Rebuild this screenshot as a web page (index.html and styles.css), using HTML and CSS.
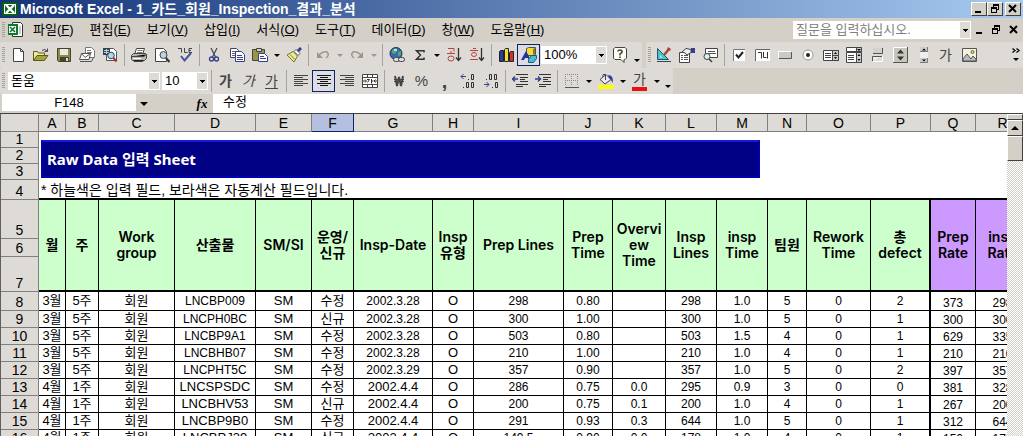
FILE: index.html
```html
<!DOCTYPE html>
<html lang="ko">
<head>
<meta charset="utf-8">
<title>Microsoft Excel - 1_카드_회원_Inspection_결과_분석</title>
<link rel="stylesheet" href="styles.css">
</head>
<body>
<div class="window">
  <header class="titlebar">
    <svg class="app-icon" viewBox="0 0 16 16"><path fill="#0b5a1c" d="M0 1h16v14H0z"/><path fill="#fff" d="M2 3h12v10H2z"/><path fill="#0b6b22" d="M3 4h10v8H3z"/><path stroke="#fff" stroke-width="2.4" d="M4 4l8 8M12 4l-8 8"/></svg>
    <h1 class="title">Microsoft Excel - 1_카드_회원_Inspection_결과_분석</h1>
    <div class="win-buttons">
      <button class="win-btn" aria-label="최소화"><svg viewBox="0 0 12 10"><path d="M2 7h6v2H2z"/></svg></button>
      <button class="win-btn" aria-label="복원"><svg viewBox="0 0 12 10"><path fill-rule="evenodd" d="M4 0h6v6H8v3H2V3h2zM5 2v1h3v2h1V2zM3 5v3h4V5z"/></svg></button>
      <button class="win-btn win-close" aria-label="닫기"><svg viewBox="0 0 12 10"><path stroke="#000" stroke-width="2" d="M2 1l7 7M9 1l-7 7"/></svg></button>
    </div>
  </header>

  <nav class="menubar">
    <span class="grip"></span>
    <svg class="book-icon" viewBox="0 0 17 16"><path fill="#fff" stroke="#333" d="M5.500 .5h8l2 2v12h-10z"/><path stroke="#999" d="M12 5h2M12 7h2M12 9h2M12 11h2"/><path fill="#0b7a2a" d="M1 2h10v11H1z"/><path fill="#fff" d="M2 4h7v7H2z"/><path stroke="#0b7a2a" stroke-width="1.600" d="M3 5l5 5M8 5l-5 5"/></svg>
    <button class="menu">파일(<u>F</u>)</button>
    <button class="menu">편집(<u>E</u>)</button>
    <button class="menu">보기(<u>V</u>)</button>
    <button class="menu">삽입(<u>I</u>)</button>
    <button class="menu">서식(<u>O</u>)</button>
    <button class="menu">도구(<u>T</u>)</button>
    <button class="menu">데이터(<u>D</u>)</button>
    <button class="menu">창(<u>W</u>)</button>
    <button class="menu">도움말(<u>H</u>)</button>
    <span class="combo ask"><input type="text" aria-label="질문" placeholder="질문을 입력하십시오."></span>
    <div class="doc-buttons">
      <button class="doc-btn" aria-label="창 최소화"><svg viewBox="0 0 12 10"><path d="M2 7h6v2H2z"/></svg></button>
      <button class="doc-btn" aria-label="창 복원"><svg viewBox="0 0 12 10"><path fill-rule="evenodd" d="M4 0h6v6H8v3H2V3h2zM5 2v1h3v2h1V2zM3 5v3h4V5z"/></svg></button>
      <button class="doc-btn doc-close" aria-label="창 닫기"><svg viewBox="0 0 12 10"><path stroke="#000" stroke-width="2" d="M2 1l7 7M9 1l-7 7"/></svg></button>
    </div>
  </nav>

  <div class="toolbar-row">
    <div class="toolbar">
      <span class="grip"></span>
      <button class="tool" aria-label="새로 만들기"><svg viewBox="0 0 16 16"><path fill="#fff" stroke="#444" d="M3.500 1.500h7l3 3v10h-10z"/><path fill="none" stroke="#444" d="M10.500 1.500v3h3"/></svg></button>
      <button class="tool" aria-label="열기"><svg viewBox="0 0 16 16"><path fill="#ece9a0" stroke="#5d5b1c" d="M.5 13.500v-9h4l1 1.500h6v3"/><path fill="#a5a33c" stroke="#5d5b1c" d="M.5 13.500l3.500-5h11l-3.500 5z"/><path fill="none" stroke="#444" d="M9 3.500q3-2.500 5 .5M14.500 1.500v3h-3"/></svg></button>
      <button class="tool" aria-label="저장"><svg viewBox="0 0 16 16"><path fill="#8a8a4a" stroke="#44442a" d="M1.500 1.500h13v13h-12l-1-1z"/><path fill="#e8e8e4" d="M4 2h8v6H4z"/><path fill="#44442a" d="M4 10h9v4H4z"/><path fill="#ddd" d="M10 11h2v3h-2z"/></svg></button>
      <button class="tool" aria-label="전자 메일"><svg viewBox="0 0 16 16"><path fill="#fff" stroke="#777" d="M6.500 .5h6l3 3v7h-9z"/><path stroke="#777" d="M8 3.500h4M8 5.500h5"/><path fill="#fff" stroke="#555" d="M2.500 6.500h9l-1.500 6H.5z"/><path fill="none" stroke="#555" d="M2.500 6.500l3.500 4 5.500-4M1 14.500h11.500l2-4"/></svg></button>
      <button class="tool" aria-label="검색"><svg viewBox="0 0 16 16"><path fill="#fff" stroke="#555" d="M4.500 1.500h7l3 3v9h-10z"/><path fill="#345" d="M1 1h7v7H1z"/><path stroke="#bcd" d="M2 3.500h5M2 5.500h5M4.500 2v5"/><circle cx="9" cy="8.500" r="3.300" fill="#a9dbe8" stroke="#345"/><path stroke="#a33" stroke-width="2.200" d="M11.500 11l3 3.500"/></svg></button>
      <span class="sep"></span>
      <button class="tool" aria-label="인쇄"><svg viewBox="0 0 16 16"><path fill="#fff" stroke="#444" d="M5.500 1.500h8l-2 6h-8z"/><path stroke="#777" d="M6.500 3.500h5M6 5.500h5"/><path fill="#b8b6ae" stroke="#444" d="M.5 8.500l2-2h12l1 1v4l-2 2H1.500l-1-1z"/><path stroke="#444" d="M1 9.500h12l2-2M3 13.500v1h8l2-1"/><path stroke="#fff" d="M2 11.500h8"/></svg></button>
      <button class="tool" aria-label="인쇄 미리 보기"><svg viewBox="0 0 16 16"><path fill="#fff" stroke="#444" d="M1.500 1.500h8l3 3v10h-11z"/><circle cx="9.500" cy="8" r="3.500" fill="#b9d6de" stroke="#444"/><path stroke="#333" stroke-width="2" d="M12 11l3.500 4"/></svg></button>
      <button class="tool" aria-label="맞춤법 검사"><svg viewBox="0 0 16 16"><path fill="none" stroke="#444" d="M1 1.500h3.500v4M7.500 1v4.500h3M15 1.500h-3v4h3M12 3.500h2"/><path fill="none" stroke="#4850a0" stroke-width="2" d="M4 9l3.500 4.500L14 6"/></svg></button>
      <span class="sep"></span>
      <button class="tool" aria-label="잘라내기"><svg viewBox="0 0 16 16"><path fill="none" stroke="#445" stroke-width="1.200" d="M5 1l4.500 9M11 1L6.500 10"/><circle cx="5.500" cy="12" r="2" fill="none" stroke="#34408f" stroke-width="1.300"/><circle cx="10.500" cy="12" r="2" fill="none" stroke="#34408f" stroke-width="1.300"/></svg></button>
      <button class="tool" aria-label="복사"><svg viewBox="0 0 16 16"><path fill="#fff" stroke="#445" d="M1.500 1.500h6l2 2v7h-8z"/><path stroke="#667" d="M3 4.500h4M3 6.500h4M3 8.500h3"/><path fill="#fff" stroke="#34408f" d="M6.500 4.500h6l3 3v7h-9z"/><path stroke="#34408f" d="M8 8.500h5M8 10.500h6M8 12.500h6"/></svg></button>
      <button class="tool" aria-label="붙여넣기"><svg viewBox="0 0 16 16"><path fill="#9a9648" stroke="#444" d="M.5 2.500h12v11H.5z"/><path fill="#d8d6a0" stroke="#444" d="M4.500 1.500h5v3h-5z"/><path fill="#fff" stroke="#34408f" d="M6.500 6.500h6l3 3v5h-9z"/><path stroke="#34408f" d="M8 9.500h4M8 11.500h6"/></svg></button>
      <button class="drop" aria-label="붙여넣기 옵션"></button>
      <button class="tool" aria-label="서식 복사"><svg viewBox="0 0 16 16"><path fill="#efeb9b" stroke="#77742a" d="M1 8l6-3.500 4.500 4.500L8 15z"/><path stroke="#77742a" d="M4 7.500l5 5"/><path fill="#fff" stroke="#555" d="M8 4.500l2-2 4 4-2 2z"/><path stroke="#34408f" stroke-width="3" d="M12 4l3-3"/></svg></button>
      <span class="sep"></span>
      <button class="tool" aria-label="실행 취소"><svg viewBox="0 0 16 16"><path fill="none" stroke="#9a978f" stroke-width="1.500" d="M4 8q4-4 8-3 3 3-1 6"/><path fill="#9a978f" d="M2 5v6h6z"/></svg></button>
      <button class="drop off" aria-label="실행 취소 목록"></button>
      <button class="tool" aria-label="다시 실행"><svg viewBox="0 0 16 16"><path fill="none" stroke="#9a978f" stroke-width="1.500" d="M12 8Q8 4 4 5q-3 3 1 6"/><path fill="#9a978f" d="M14 5v6H8z"/></svg></button>
      <button class="drop off" aria-label="다시 실행 목록"></button>
      <span class="sep"></span>
      <button class="tool" aria-label="하이퍼링크"><svg viewBox="0 0 16 16"><circle cx="7" cy="6.500" r="6" fill="#3a66b8" stroke="#234"/><path fill="#4fae62" d="M3 3l4-2 1 3-2 3-3-1zM9 5l3-1v4l-3 1z"/><path fill="#b9dff5" d="M5 2h3v2H5z"/><rect x="4.500" y="10.500" width="6" height="4" rx="2" fill="#ddd" stroke="#444"/><rect x="9.500" y="10.500" width="6" height="4" rx="2" fill="#ddd" stroke="#444"/></svg></button>
      <button class="tool" aria-label="자동 합계"><svg viewBox="0 0 16 16"><path fill="none" stroke="#333" stroke-width="1.500" d="M12 5.500V3.800H4.500L8.500 8l-4 4.200H12v-1.700"/></svg></button>
      <button class="drop" aria-label="함수 목록"></button>
      <button class="tool" aria-label="오름차순 정렬"><svg viewBox="0 0 16 16"><path fill="none" stroke="#b0473f" d="M2 1.500h6v3M5 4v2.500M1 6.500h8"/><ellipse cx="5" cy="11.500" rx="3" ry="2.500" fill="none" stroke="#b0473f"/><path fill="none" stroke="#333" stroke-width="1.300" d="M12.500 1v12M10 10.500l2.500 3 2.500-3"/></svg></button>
      <button class="tool" aria-label="내림차순 정렬"><svg viewBox="0 0 16 16"><path fill="none" stroke="#b0473f" d="M4 1.500h3M1 3.500h8M1 12.500h8"/><ellipse cx="5" cy="7.500" rx="2.500" ry="2" fill="none" stroke="#b0473f"/><path fill="none" stroke="#333" stroke-width="1.300" d="M12.500 1v12M10 10.500l2.500 3 2.500-3"/></svg></button>
      <span class="sep"></span>
      <button class="tool" aria-label="차트 마법사"><svg viewBox="0 0 16 16"><path fill="#2c3c9c" stroke="#222" d="M1.500 4.500l1-1h3v11h-4z"/><path fill="#f2dc3c" stroke="#222" d="M6.500 2.500l1-1h3v13h-4z"/><path fill="#cc3328" stroke="#222" d="M11.500 5.500l1-1h3v10h-4z"/></svg></button>
      <button class="tool on" aria-label="그리기"><svg viewBox="0 0 16 16"><path fill="#f0dd35" stroke="#554" d="M5.500 1.500l2-1h7v7l-2 1h-7z"/><path fill="#8a7a20" d="M12 2l2-1v6l-2 1z"/><path fill="#2430a0" d="M0 13L5 4l5 9H8L7 11H4l-1 2z"/><path fill="#44bfd6" stroke="#257" d="M7.500 12.500l3-4h5v3l-3 4h-5z"/></svg></button>
      <span class="combo zoom"><select aria-label="확대/축소"><option>100%</option></select></span>
      <button class="tool" aria-label="도움말"><svg viewBox="0 0 16 16"><path fill="#fffef0" stroke="#444" d="M3 .5h10l1.500 1.500v9L13 12.500h-1v3l-3-3H3L1.500 11V2z"/><path fill="none" stroke="#444" stroke-width="1.600" d="M5.800 4.500Q6 3 8 3t2.200 1.600Q10.200 6 8 7v1.500M8 9.500v1.500"/></svg></button>
      <button class="drop low" aria-label="도구 모음 옵션"></button>
    </div>
    <div class="toolbar grow">
      <span class="grip"></span>
      <button class="tool" aria-label="디자인 모드"><svg viewBox="0 0 16 16"><path fill="#48c4d4" stroke="#256" d="M1.500 1.500v11h11z"/><path fill="#dedad5" d="M4 8v2.500h2.500z"/><path stroke="#345" d="M1 14.500h14"/><path stroke="#8a5230" stroke-width="2.400" d="M8 8l5-6"/><path fill="#c33" d="M12 0l3 2-1 2-3-2z"/></svg></button>
      <button class="tool" aria-label="속성"><svg viewBox="0 0 16 16"><path fill="#fff" stroke="#444" d="M.5 5.500h10v10H.5z"/><path stroke="#555" d="M2 8.500h2M5 8.500h4M2 10.500h2M5 10.500h4M2 12.500h2M5 12.500h4"/><path fill="#eee" stroke="#444" d="M3 5l4-3.500 5 1v3L8 8 6 6z"/><path fill="#34408f" d="M12 1h4v5h-4z"/></svg></button>
      <button class="tool" aria-label="코드 보기"><svg viewBox="0 0 16 16"><path fill="#fff" stroke="#444" d="M3.500 1.500h12v9h-12z"/><path stroke="#555" d="M6 4.500h7M6 6.500h8"/><circle cx="5" cy="9.500" r="3" fill="#ddeef0" stroke="#444"/><path stroke="#444" stroke-width="1.600" d="M7 12l3 3"/></svg></button>
      <span class="sep"></span>
      <button class="tool" aria-label="확인란"><svg viewBox="0 0 16 16"><path fill="#fff" d="M2 2h12v12H2z"/><path fill="none" stroke="#777" d="M2.500 14V2.500H14"/><path fill="none" stroke="#222" stroke-width="2" d="M5 7.500l2.500 3L12 5"/></svg></button>
      <button class="tool" aria-label="입력란"><svg viewBox="0 0 16 16"><path fill="#fff" d="M1 2h15v12H1z"/><path fill="none" stroke="#666" d="M1.500 14V2.500H16"/><path fill="none" stroke="#333" d="M4 5.500h3.500v6M9.500 5v5.500h3M13.500 5v6.500"/></svg></button>
      <button class="tool" aria-label="명령 단추"><svg viewBox="0 0 16 16"><path fill="#ccc9c1" d="M2 5h12v6H2z"/><path fill="none" stroke="#fff" d="M1.500 11V4.500H14"/><path fill="none" stroke="#555" d="M2 11.500h12.500V5"/></svg></button>
      <button class="tool" aria-label="옵션 단추"><svg viewBox="0 0 16 16"><circle cx="8" cy="8" r="5" fill="#fff" stroke="#999"/><circle cx="8" cy="8" r="2" fill="#222"/></svg></button>
      <button class="tool" aria-label="목록 상자"><svg viewBox="0 0 16 16"><path fill="#fff" stroke="#444" d="M.5 3.500h15v10H.5z"/><path stroke="#444" d="M2 6.500h6M2 8.500h6M2 10.500h6"/><path fill="#ccc" stroke="#444" d="M9.500 3.500h6v10h-6zM9.500 8.500h6"/><path d="M11 7l1.500-2L14 7zM11 10l1.500 2L14 10z"/></svg></button>
      <button class="tool" aria-label="콤보 상자"><svg viewBox="0 0 16 16"><path fill="#fff" stroke="#444" d="M.5 .5h15v4H.5zM.5 5.500h15v10H.5z"/><path stroke="#444" d="M2 8.500h6M2 10.500h6M2 12.500h6"/><path fill="#ccc" stroke="#444" d="M10.500 .5h5v4h-5zM10.500 5.500h5v10h-5z"/><path d="M11 2h4l-2 2zM11.500 9l1.500-2 1.500 2zM11.500 12l1.500 2 1.500-2z"/></svg></button>
      <button class="tool" aria-label="토글 단추"><svg viewBox="0 0 16 16"><path fill="#d4d0c8" d="M4 1h9v6H4z"/><path fill="none" stroke="#555" d="M4 6.500h9.500V1"/><path fill="none" stroke="#fff" d="M4 14.500h9.500V9"/><path fill="#eee" stroke="#555" d="M3.500 14V9.500H13"/></svg></button>
      <button class="tool" aria-label="스핀 단추"><svg viewBox="0 0 16 16"><path fill="#c8c5bd" d="M1 0h15v16H1z"/><path fill="none" stroke="#fff" d="M1.500 15V.5H15"/><path fill="none" stroke="#555" d="M1 15.500h14.500V0"/><path fill="#333" d="M5 6.500l3.500-4 3.500 4zM5 9.500l3.500 4 3.500-4z"/></svg></button>
      <button class="tool" aria-label="스크롤 막대"><svg viewBox="0 0 16 16"><path fill="#eee" d="M5 1h8v14H5z"/><path fill="#ccc" d="M5 0h8v5H5zM5 11h8v5H5z"/><path fill="none" stroke="#777" d="M5 4.500h7.500V0M5 15.500h7.500V11"/><path d="M7 3.500l2-2 2 2zM7 12.500l2 2 2-2z"/></svg></button>
      <button class="tool text-tool" aria-label="레이블">가</button>
      <button class="tool" aria-label="이미지"><svg viewBox="0 0 16 16"><path fill="#f4f2dc" stroke="#555" d="M1.500 1.500h14v13h-14z"/><circle cx="11.500" cy="5" r="1.500" fill="#efe04a" stroke="#665"/><path fill="#bbb" stroke="#555" d="M2 12l4-5 4 5 2-3 3 3v2H2z"/></svg></button>
      <button class="more" aria-label="추가 단추"><svg viewBox="0 0 8 16"><path fill="none" stroke="#000" stroke-width="1.300" d="M.5 1.500l2.500 2-2.500 2M4.500 1.500l2.500 2-2.500 2"/><path d="M1 11h6l-3 3z"/></svg></button>
    </div>
  </div>

  <div class="toolbar-row">
    <div class="toolbar">
      <span class="grip"></span>
      <span class="combo font"><select aria-label="글꼴"><option>돋움</option></select></span>
      <span class="combo size"><select aria-label="글꼴 크기"><option>10</option></select></span>
      <span class="sep"></span>
      <button class="tool text-tool b" aria-label="굵게">가</button>
      <button class="tool text-tool i" aria-label="기울임꼴">가</button>
      <button class="tool text-tool u" aria-label="밑줄">가</button>
      <span class="sep"></span>
      <button class="tool" aria-label="왼쪽 맞춤"><svg viewBox="0 0 16 16"><path stroke="#444" d="M1 2.500h14M1 4.500h9M1 6.500h14M1 8.500h9M1 10.500h14M1 12.500h9"/></svg></button>
      <button class="tool on" aria-label="가운데 맞춤"><svg viewBox="0 0 16 16"><path stroke="#111" d="M1 2.500h14M4 4.500h8M1 6.500h14M4 8.500h8M1 10.500h14M4 12.500h8"/></svg></button>
      <button class="tool" aria-label="오른쪽 맞춤"><svg viewBox="0 0 16 16"><path stroke="#444" d="M1 2.500h14M6 4.500h9M1 6.500h14M6 8.500h9M1 10.500h14M6 12.500h9"/></svg></button>
      <button class="tool" aria-label="병합하고 가운데 맞춤"><svg viewBox="0 0 16 16"><path fill="#fff" stroke="#444" d="M.5 1.500h15v13H.5zM.5 4.500h15M.5 11.500h15M5.500 1.500v3M10.500 1.500v3M5.500 11.500v3M10.500 11.500v3"/><path fill="none" stroke="#333" d="M5 6.500h2.500l-2 3M9.500 6v4.500M10 8h1.500M1 8h3M15 8h-3M3 6.500L4.500 8 3 9.500M13.500 6.500L12 8l1.500 1.500"/></svg></button>
      <span class="sep"></span>
      <button class="tool" aria-label="통화 스타일"><svg viewBox="0 0 16 16"><path fill="none" stroke="#444" stroke-width="2" d="M4 3l2 10 2-9 2 9 2-10"/><path stroke="#444" d="M3 6.500h10M3 8.500h10"/></svg></button>
      <button class="tool sign" aria-label="백분율 스타일">%</button>
      <button class="tool sign comma" aria-label="쉼표 스타일">,</button>
      <button class="tool" aria-label="자릿수 늘림"><svg viewBox="0 0 16 16"><path fill="none" stroke="#34408f" d="M1 3.500h5M3.500 1L1 3.500 3.500 6"/><path fill="#333" d="M8 6h1v1H8zM3 14h1v1H3z"/><path fill="none" stroke="#333" d="M11.500 1.500h2v5h-2zM6.500 9.500h2v5h-2zM11.500 9.500h2v5h-2z"/></svg></button>
      <button class="tool" aria-label="자릿수 줄임"><svg viewBox="0 0 16 16"><path fill="none" stroke="#34408f" d="M1 11.500h5M3.500 9L6 11.500 3.500 14"/><path fill="#333" d="M3 6h1v1H3zM9 14h1v1H9z"/><path fill="none" stroke="#333" d="M6.500 1.500h2v5h-2zM11.500 1.500h2v5h-2zM12.500 9.500h2v5h-2z"/></svg></button>
      <span class="sep"></span>
      <button class="tool" aria-label="내어쓰기"><svg viewBox="0 0 16 16"><path stroke="#333" d="M4 1.500h12M8 4.500h8M8 6.500h5M8 8.500h8M4 11.500h12M4 13.500h7"/><path fill="none" stroke="#34408f" stroke-width="1.400" d="M0 6h6M3 3.500L.5 6 3 8.500"/></svg></button>
      <button class="tool" aria-label="들여쓰기"><svg viewBox="0 0 16 16"><path stroke="#333" d="M4 1.500h12M8 4.500h8M8 6.500h5M8 8.500h8M4 11.500h12M4 13.500h7"/><path fill="none" stroke="#34408f" stroke-width="1.400" d="M0 6h6M3 3.500L5.500 6 3 8.500"/></svg></button>
      <span class="sep"></span>
      <button class="tool" aria-label="테두리"><svg viewBox="0 0 16 16"><path fill="none" stroke="#888" stroke-dasharray="1 1" d="M1.500 1v12M7.500 1v12M13.500 1v12M1 1.500h13M1 7.500h13"/><path stroke="#555" d="M1 14.500h14"/></svg></button>
      <button class="drop" aria-label="테두리 목록"></button>
      <button class="tool" aria-label="채우기 색"><svg viewBox="0 0 16 16"><path fill="#ff0" d="M0 12h16v4H0z"/><path fill="#e8e8f4" stroke="#445" d="M2 6.500l6-5 5 5-6 4.500z"/><path fill="none" stroke="#445" d="M7.500 7V1.500q-3-1-3 2"/><path fill="#34408f" d="M10 2q6 0 4.500 8Q13 6 11 5z"/></svg></button>
      <button class="drop" aria-label="채우기 색 목록"></button>
      <button class="tool text-tool color" aria-label="글꼴 색">가</button>
      <button class="drop" aria-label="글꼴 색 목록"></button>
      <button class="drop low" aria-label="도구 모음 옵션"></button>
    </div>
  </div>

  <div class="formula-bar">
    <input class="name-box" type="text" aria-label="이름 상자" value="F148">
    <button class="drop name-drop" aria-label="이름 목록"></button>
    <button class="fx" aria-label="함수 삽입">fx</button>
    <input class="formula" type="text" aria-label="수식 입력줄" value="수정">
  </div>

  <main class="sheet">
    <div class="grid">
      <table>
        <colgroup><col class="w-head"><col class="w-a"><col class="w-b"><col class="w-c"><col class="w-d"><col class="w-e"><col class="w-f"><col class="w-g"><col class="w-h"><col class="w-i"><col class="w-j"><col class="w-k"><col class="w-l"><col class="w-m"><col class="w-n"><col class="w-o"><col class="w-p"><col class="w-q"><col></colgroup>
        <thead>
          <tr class="letters"><th></th><th>A</th><th>B</th><th>C</th><th>D</th><th>E</th><th class="active">F</th><th>G</th><th>H</th><th>I</th><th>J</th><th>K</th><th>L</th><th>M</th><th>N</th><th>O</th><th>P</th><th>Q</th><th>R</th></tr>
        </thead>
        <tbody>
          <tr class="h16"><th>1</th><td class="banner-cell" colspan="13" rowspan="3"><div class="banner">Raw Data 입력 Sheet</div></td><td class="blank" colspan="5" rowspan="3"></td></tr>
          <tr class="h16"><th>2</th></tr>
          <tr class="h16"><th>3</th></tr>
          <tr class="h20"><th>4</th><td class="note" colspan="18">* 하늘색은 입력 필드, 보라색은 자동계산 필드입니다.</td></tr>
          <tr class="h39"><th>5</th><td class="head" rowspan="3">월</td><td class="head" rowspan="3">주</td><td class="head" rowspan="3">Work<br>group</td><td class="head" rowspan="3">산출물</td><td class="head" rowspan="3">SM/SI</td><td class="head" rowspan="3">운영/<br>신규</td><td class="head" rowspan="3">Insp-Date</td><td class="head" rowspan="3">Insp<br>유형</td><td class="head" rowspan="3">Prep Lines</td><td class="head" rowspan="3">Prep<br>Time</td><td class="head" rowspan="3">Overvi<br>ew<br>Time</td><td class="head" rowspan="3">Insp<br>Lines</td><td class="head" rowspan="3">insp<br>Time</td><td class="head" rowspan="3">팀원</td><td class="head" rowspan="3">Rework<br>Time</td><td class="head thick" rowspan="3">총<br>defect</td><td class="head calc" rowspan="3">Prep<br>Rate</td><td class="head calc" rowspan="3">insp<br>Rate</td></tr>
          <tr class="h18"><th>6</th></tr>
          <tr class="h35"><th>7</th></tr>
          <tr class="h19 data"><th>8</th><td class="t">3월</td><td class="t">5주</td><td class="t">회원</td><td>LNCBP009</td><td class="t">SM</td><td class="t">수정</td><td>2002.3.28</td><td class="t">O</td><td>298</td><td>0.80</td><td></td><td>298</td><td>1.0</td><td>5</td><td>0</td><td class="thick">2</td><td class="rate">373</td><td class="rate">298</td></tr>
          <tr class="h17 data"><th>9</th><td class="t">3월</td><td class="t">5주</td><td class="t">회원</td><td>LNCPH0BC</td><td class="t">SM</td><td class="t">신규</td><td>2002.3.28</td><td class="t">O</td><td>300</td><td>1.00</td><td></td><td>300</td><td>1.0</td><td>5</td><td>0</td><td class="thick">1</td><td class="rate">300</td><td class="rate">300</td></tr>
          <tr class="h17 data"><th>10</th><td class="t">3월</td><td class="t">5주</td><td class="t">회원</td><td>LNCBP9A1</td><td class="t">SM</td><td class="t">수정</td><td>2002.3.28</td><td class="t">O</td><td>503</td><td>0.80</td><td></td><td>503</td><td>1.5</td><td>4</td><td>0</td><td class="thick">1</td><td class="rate">629</td><td class="rate">335</td></tr>
          <tr class="h17 data"><th>11</th><td class="t">3월</td><td class="t">5주</td><td class="t">회원</td><td>LNCBHB07</td><td class="t">SM</td><td class="t">수정</td><td>2002.3.28</td><td class="t">O</td><td>210</td><td>1.00</td><td></td><td>210</td><td>1.0</td><td>4</td><td>0</td><td class="thick">1</td><td class="rate">210</td><td class="rate">210</td></tr>
          <tr class="h17 data"><th>12</th><td class="t">3월</td><td class="t">5주</td><td class="t">회원</td><td>LNCPHT5C</td><td class="t">SM</td><td class="t">수정</td><td>2002.3.29</td><td class="t">O</td><td>357</td><td>0.90</td><td></td><td>357</td><td>1.0</td><td>5</td><td>0</td><td class="thick">2</td><td class="rate">397</td><td class="rate">357</td></tr>
          <tr class="h17 data"><th>13</th><td class="t">4월</td><td class="t">1주</td><td class="t">회원</td><td class="t">LNCSPSDC</td><td class="t">SM</td><td class="t">수정</td><td class="t">2002.4.4</td><td class="t">O</td><td>286</td><td>0.75</td><td>0.0</td><td>295</td><td>0.9</td><td>3</td><td>0</td><td class="thick">0</td><td class="rate">381</td><td class="rate">328</td></tr>
          <tr class="h17 data"><th>14</th><td class="t">4월</td><td class="t">1주</td><td class="t">회원</td><td class="t">LNCBHV53</td><td class="t">SM</td><td class="t">신규</td><td class="t">2002.4.4</td><td class="t">O</td><td>200</td><td>0.75</td><td>0.1</td><td>200</td><td>1.0</td><td>4</td><td>0</td><td class="thick">1</td><td class="rate">267</td><td class="rate">200</td></tr>
          <tr class="h17 data"><th>15</th><td class="t">4월</td><td class="t">1주</td><td class="t">회원</td><td class="t">LNCBP9B0</td><td class="t">SM</td><td class="t">수정</td><td class="t">2002.4.4</td><td class="t">O</td><td>291</td><td>0.93</td><td>0.3</td><td>644</td><td>1.0</td><td>5</td><td>0</td><td class="thick">1</td><td class="rate">312</td><td class="rate">644</td></tr>
          <tr class="h17 data"><th>16</th><td class="t">4월</td><td class="t">1주</td><td class="t">회원</td><td class="t">LNCBPJ39</td><td class="t">SM</td><td class="t">신규</td><td class="t">2002.4.4</td><td class="t">O</td><td>149.5</td><td>0.90</td><td>0.0</td><td>178</td><td>1.0</td><td>4</td><td>0</td><td class="thick">1</td><td class="rate">150</td><td class="rate">178</td></tr>
        </tbody>
      </table>
    </div>
    <div class="scrollbar">
      <span class="split"></span>
      <button class="scroll-up" aria-label="위로 스크롤"></button>
      <span class="thumb"></span>
    </div>
  </main>
</div>
</body>
</html>
```

FILE: styles.css
```css
* { box-sizing: border-box; }

body {
  margin: 0;
  background: #d4d0c8;
  color: #000;
  font: 13px/16px "Liberation Sans", "Noto Sans CJK KR", sans-serif;
}

button, input, select {
  margin: 0;
  padding: 0;
  border: 0;
  border-radius: 0;
  background: transparent;
  color: inherit;
  font: inherit;
  appearance: none;
}

.window {
  display: flex;
  flex-direction: column;
  height: 100vh;
  overflow: hidden;
}

/* Title bar */
.titlebar {
  display: flex;
  flex: none;
  align-items: center;
  height: 18px;
  padding: 0 2px;
  background: linear-gradient(to right, #143478, #a6caf0);
}
.app-icon { width: 16px; height: 16px; }
.title {
  flex: 1;
  margin: 0 0 0 2px;
  color: #fff;
  font-size: 14px;
  font-weight: 700;
  line-height: 18px;
  white-space: nowrap;
}
.win-buttons { display: flex; }
.win-btn {
  display: flex;
  width: 16px;
  height: 14px;
  padding: 1px;
  border: 1px solid;
  border-color: #fff #404040 #404040 #fff;
  background: #d4d0c8;
}
.win-close { margin-left: 2px; }
.win-btn svg, .doc-btn svg { width: 12px; height: 10px; }

/* Menu bar */
.menubar {
  display: flex;
  flex: none;
  align-items: center;
  height: 24px;
  padding-right: 2px;
}
.grip {
  flex: none;
  width: 3px;
  height: 16px;
  margin: 0 1px 0 2px;
  background: repeating-linear-gradient(#a5a29b 0 1px, transparent 1px 2px);
}
.book-icon { width: 17px; height: 16px; margin: 0 1px; }
.menu { padding: 0 8px; white-space: nowrap; }
.doc-buttons { display: flex; gap: 3px; margin-left: 3px; }
.doc-btn { display: flex; width: 13px; }
.doc-close { margin-left: 2px; }

.combo {
  position: relative;
  display: flex;
  flex: none;
  height: 18px;
  background: #fff;
}
.combo select, .combo input { width: 100%; padding: 0 14px 1px 3px; }
.combo::after {
  content: "";
  position: absolute;
  top: 1px;
  right: 1px;
  bottom: 1px;
  width: 10px;
  background: linear-gradient(#000, #000) 3px 7px / 5px 1px no-repeat,
    linear-gradient(#000, #000) 4px 8px / 3px 1px no-repeat,
    linear-gradient(#000, #000) 5px 9px / 1px 1px no-repeat,
    #dedad5;
  pointer-events: none;
}
.ask { width: 178px; margin-left: auto; }
.ask input::placeholder { color: #808080; opacity: 1; }
.zoom { width: 66px; margin: 0 1px; }
.font { width: 152px; margin: 0 2px; }
.size { width: 46px; }

/* Toolbars */
.toolbar-row {
  display: flex;
  flex: none;
  gap: 4px;
  height: 26px;
}
.toolbar {
  display: flex;
  align-items: center;
  border-radius: 2px;
  background: #dedad5;
}
.grow { flex: 1; }
.tool {
  display: flex;
  flex: none;
  align-items: center;
  justify-content: center;
  width: 23px;
  height: 22px;
}
.tool svg { width: 16px; height: 16px; }
.on { border: 1px solid #0a246a; background: #dcdce2; }
.sep {
  flex: none;
  width: 1px;
  height: 22px;
  margin: 0 2px 0 3px;
  background: #a5a29b;
}
.drop { display: flex; flex: none; justify-content: center; width: 11px; }
.drop::before {
  content: "";
  border: 3px solid transparent;
  border-top-color: #000;
  border-bottom: 0;
}
.off::before { border-top-color: #9a978f; }
.low { align-self: flex-end; margin-bottom: 6px; }
.more { width: 8px; height: 16px; margin: 0 3px 0 auto; }
.more svg { display: block; width: 8px; height: 16px; }
.text-tool { color: #444; font-size: 14px; }
.b { font-weight: 700; }
.i { font-style: italic; }
.u { text-decoration: underline; text-underline-offset: 2px; }
.color {
  align-items: flex-start;
  height: 20px;
  border: solid #dedad5;
  border-width: 0 4px;
  background: linear-gradient(#e81010, #e81010) bottom / 100% 4px no-repeat;
}
.sign { color: #444; font-size: 15px; }
.comma { font-size: 20px; font-weight: 700; }

/* Formula bar */
.formula-bar {
  display: flex;
  flex: none;
  height: 19px;
  padding-left: 2px;
}
.name-box { width: 134px; height: 17px; background: #fff; text-align: center; }
.name-drop { align-items: center; width: 16px; }
.name-drop::before { border-width: 4px 4px 0; }
.fx {
  width: 20px;
  margin-left: 41px;
  padding-right: 2px;
  font: italic 700 13px/18px "Liberation Serif", serif;
}
.formula { flex: 1; padding: 0 10px 3px; background: #fff; }

/* Worksheet */
.sheet {
  display: flex;
  flex: 1;
  min-height: 0;
  border-top: 1px solid #404040;
  border-left: 1px solid #606060;
  background: #fff;
}
.grid { flex: 1; min-width: 0; overflow: hidden; }

table {
  width: 100%;
  min-width: 1029px;
  border-spacing: 0;
  table-layout: fixed;
}
.w-head { width: 38px; }
.w-a { width: 27px; }
.w-b { width: 33px; }
.w-c { width: 76px; }
.w-d { width: 81px; }
.w-e { width: 56px; }
.w-f { width: 42px; }
.w-g { width: 79px; }
.w-h { width: 41px; }
.w-i { width: 90px; }
.w-j { width: 49px; }
.w-k { width: 53px; }
.w-l { width: 51px; }
.w-m { width: 51px; }
.w-n { width: 39px; }
.w-o { width: 64px; }
.w-p { width: 60px; }
.w-q { width: 45px; }

th, td { padding: 0; overflow: hidden; white-space: nowrap; }
th {
  padding-bottom: 1px;
  border-right: 1px solid #808080;
  border-bottom: 1px solid #808080;
  background: #dedad5;
  font-size: 14px;
  font-weight: 400;
  line-height: 14px;
  vertical-align: bottom;
}
.active { border-color: #0a246a; background: #b5bfe0; }
.letters { height: 18px; }
.h16 { height: 16px; }
.h17 { height: 17px; }
.h18 { height: 18px; }
.h19 { height: 19px; }
.h20 { height: 20px; }
.h35 { height: 35px; }
.h39 { height: 39px; }

.banner-cell { padding: 8px 8px 0 2px; vertical-align: top; }
.banner {
  height: 38px;
  padding-left: 4px;
  border: 2px solid #0000b0;
  border-top-color: #1818d8;
  background: #000084;
  color: #fff;
  font: 700 15px/34px "Noto Sans", "Noto Sans CJK KR", sans-serif;
}
.note {
  padding-left: 2px;
  border-bottom: 2px solid #000;
  font-size: 14px;
  line-height: 16px;
  vertical-align: bottom;
}
.head {
  border-right: 1px solid #000;
  border-bottom: 2px solid #000;
  background: #ccffcc;
  font: 600 14px/16px "Inter", "Noto Sans CJK KR", sans-serif;
  text-align: center;
}
.calc { background: #cc99ff; }
.data td {
  border-right: 1px solid #000;
  border-bottom: 1px solid #000;
  font-size: 12px;
  line-height: 14px;
  text-align: center;
}
.data .t { font-size: 13px; }
.data .rate { vertical-align: bottom; }
td.thick, .data td.thick { border-right: 2px solid #000; }

/* Vertical scroll bar */
.scrollbar {
  display: flex;
  flex: none;
  flex-direction: column;
  width: 16px;
  background: repeating-conic-gradient(#fff 0 25%, #d4d0c8 0 50%) 0 0 / 2px 2px;
}
.split, .scroll-up, .thumb {
  flex: none;
  border: 1px solid;
  border-color: #fff #404040 #404040 #fff;
  background: #d4d0c8;
}
.split { height: 6px; }
.scroll-up { display: flex; align-items: center; justify-content: center; height: 16px; }
.scroll-up::before {
  content: "";
  border: 4px solid transparent;
  border-top: 0;
  border-bottom-color: #000;
}
.thumb { height: 25px; }
```
